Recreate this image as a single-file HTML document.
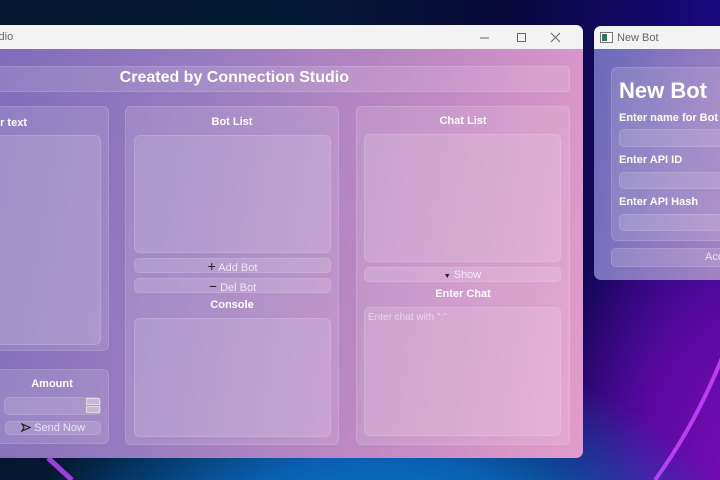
<!DOCTYPE html>
<html><head><meta charset="utf-8"><style>
*{margin:0;padding:0;box-sizing:border-box}
html,body{width:720px;height:480px;overflow:hidden}
body{position:relative;font-family:"Liberation Sans",sans-serif;
background:
radial-gradient(ellipse 520px 300px at 380px 560px, #0a86d8 0%, #0a5fb0 35%, rgba(10,40,120,0) 70%),
radial-gradient(ellipse 300px 420px at 760px 470px, #7a10b8 0%, #5a08a0 40%, rgba(40,0,140,0) 75%),
linear-gradient(90deg,#03182e 0%,#021a33 40%,#08083a 70%,#1a0880 100%);}
.a{position:absolute}
.win{position:absolute;border-radius:7px;overflow:hidden}
.tb{position:absolute;left:0;right:0;top:0;height:24px;background:#f3f3f3;color:#666;font-size:11px}
.bx{position:absolute;background:rgba(255,255,255,0.13);border:1px solid rgba(255,255,255,0.12);border-radius:6px}
.lb{position:absolute;color:#fff;font-weight:bold;font-size:11px;text-align:center}
.bt{position:absolute;background:rgba(255,255,255,0.14);border:1px solid rgba(255,255,255,0.12);border-radius:5px;color:rgba(255,255,255,0.75);font-size:11px;text-align:center;line-height:14px}
</style></head><body>
<svg class="a" style="left:0;top:0" width="720" height="480">
 <path d="M48 458 L72 480" stroke="#b040f0" stroke-width="5" fill="none" opacity="0.9"/>
 <path d="M722 358 Q695 425 655 480" stroke="#c848ff" stroke-width="4" fill="none" opacity="0.85"/>
</svg>

<div class="win" style="left:-8px;top:25px;width:591px;height:433px;background:linear-gradient(100deg,#7d6cb9 0%,#9a7dc0 35%,#c38ac4 70%,#e39ccb 100%)">
 <div class="tb"><span class="a" style="left:-10px;top:6px">Studio</span>
  <svg class="a" style="left:488px;top:7px" width="80" height="12"><line x1="0" y1="6" x2="9" y2="6" stroke="#666"/><rect x="37.5" y="1.5" width="8" height="8" fill="none" stroke="#666"/><path d="M71 1l9 9M80 1l-9 9" stroke="#666"/></svg>
 </div>
 <div class="bx" style="left:0;top:41px;width:578px;height:26px;border-radius:4px"></div>
 <div class="lb" style="left:0;top:44px;width:357px;font-size:16px;text-align:right">Created by Connection Studio</div>
 <div class="bx" style="left:-10px;top:81px;width:127px;height:245px"></div>
 <div class="lb" style="left:0;top:92px;width:35px;text-align:right">r text</div>
 <div class="bx" style="left:-5px;top:110px;width:114px;height:210px"></div>
 <div class="bx" style="left:-10px;top:344px;width:127px;height:75px"></div>
 <div class="lb" style="left:10px;top:353px;width:100px">Amount</div>
 <div class="bx" style="left:12px;top:372px;width:97px;height:18px;border-radius:5px"></div>
 <div class="a" style="left:94px;top:373px;width:14px;height:7px;border:1px solid #ddd;background:#c8b6dc"></div>
 <div class="a" style="left:94px;top:381px;width:14px;height:7px;border:1px solid #ddd;background:#c8b6dc"></div>
 <div class="bt" style="left:13px;top:396px;width:96px;height:14px;line-height:12px"><svg width="10" height="9" style="vertical-align:-1px"><path d="M1 1L9 4.5L1 8L3 4.5Z" fill="none" stroke="#222" stroke-width="1.2"/></svg> Send Now</div>
 <div class="bx" style="left:133px;top:81px;width:214px;height:339px"></div>
 <div class="lb" style="left:133px;top:91px;width:214px">Bot List</div>
 <div class="bx" style="left:142px;top:110px;width:197px;height:118px"></div>
 <div class="bt" style="left:142px;top:233px;width:197px;height:15px"><span style="color:#222;font-size:14px">+</span> Add Bot</div>
 <div class="bt" style="left:142px;top:253px;width:197px;height:15px"><span style="color:#222;font-size:14px">−</span> Del Bot</div>
 <div class="lb" style="left:133px;top:274px;width:214px">Console</div>
 <div class="bx" style="left:142px;top:293px;width:197px;height:119px"></div>
 <div class="bx" style="left:364px;top:81px;width:214px;height:339px"></div>
 <div class="lb" style="left:364px;top:90px;width:214px">Chat List</div>
 <div class="bx" style="left:372px;top:109px;width:197px;height:128px"></div>
 <div class="bt" style="left:372px;top:242px;width:197px;height:15px"><span style="color:#222;font-size:7px">▼</span> Show</div>
 <div class="lb" style="left:364px;top:263px;width:214px">Enter Chat</div>
 <div class="bx" style="left:372px;top:282px;width:197px;height:129px"></div>
 <div class="a" style="left:376px;top:287px;color:rgba(255,255,255,0.55);font-size:10px">Enter chat with ";"</div>
</div>

<div class="win" style="left:594px;top:26px;width:140px;height:254px;background:linear-gradient(100deg,#6a68b8 0%,#8a78bf 50%,#a884c4 100%)">
 <div class="tb" style="height:23px"><svg class="a" style="left:6px;top:6px" width="13" height="11"><rect x="0.5" y="0.5" width="12" height="10" fill="#fff" stroke="#777"/><rect x="2" y="2" width="5" height="7" fill="#2a7a6a"/></svg><span class="a" style="left:23px;top:6px">New Bot</span></div>
 <div class="bx" style="left:17px;top:41px;width:130px;height:174px"></div>
 <div class="lb" style="left:25px;top:52px;font-size:22px;text-align:left">New Bot</div>
 <div class="lb" style="left:25px;top:86px;text-align:left">Enter name for Bot</div>
 <div class="bx" style="left:25px;top:103px;width:120px;height:18px;border-radius:5px"></div>
 <div class="lb" style="left:25px;top:128px;text-align:left">Enter API ID</div>
 <div class="bx" style="left:25px;top:146px;width:120px;height:17px;border-radius:5px"></div>
 <div class="lb" style="left:25px;top:170px;text-align:left">Enter API Hash</div>
 <div class="bx" style="left:25px;top:188px;width:120px;height:17px;border-radius:5px"></div>
 <div class="bt" style="left:17px;top:222px;width:130px;height:19px;line-height:17px;text-align:left;padding-left:93px">Accept</div>
</div>
</body></html>
